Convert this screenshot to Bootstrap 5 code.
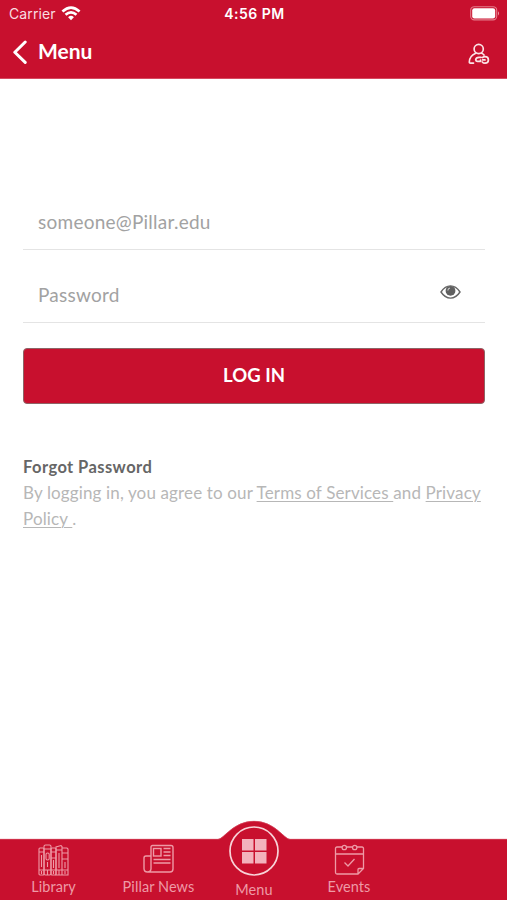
<!DOCTYPE html>
<html lang="en">
<head>
<meta charset="utf-8">
<meta name="viewport" content="width=device-width, initial-scale=1">
<title>Log in</title>
<link href="https://cdn.jsdelivr.net/npm/bootstrap@5.3.0/dist/css/bootstrap.min.css" rel="stylesheet">
<style>
:root { --brand: #c8102e; }
body { font-family: Lato, "Open Sans", sans-serif; background: #fff; }
svg { display: block; flex: none; }
.screen { height: 900px; width: 507px; overflow: hidden; }
.brand-bg { background: var(--brand); }
.top-bar { height: 79px; border-bottom: 1px solid #d64a60; }
.status { height: 27px; font-family: Inter, sans-serif; font-size: 14px; line-height: 27px; padding: 0 7px 0 9px; }
.status .carrier { color: #f9dde1; letter-spacing: .1px; }
.status .clock { font-weight: 600; letter-spacing: .5px; }
.status .wifi { margin-left: 5px; }
.title-row { height: 50px; padding: 0 17px 0 12px; }
.title-text { font-size: 21px; font-weight: 700; line-height: 26px; letter-spacing: -.05px; padding-left: 10px; margin-top: -2px; }
.login-form { padding: 116px 22px 0 23px; }
.field { height: 55px; border-bottom: 1.5px solid #e4e4e4; }
.field + .field { height: 73px; padding-top: 18px; }
.field .form-control { font-size: 19px; line-height: 28px; padding: 0 0 0 15px; color: #555; letter-spacing: .25px; }
.field .form-control::placeholder { color: #a2a2a2; opacity: 1; }
.eye { margin-right: 24px; margin-top: -7px; }
.login-btn { margin-top: 25px; height: 56px; background: var(--brand); border: 1px solid #8d6466; border-radius: 4px; font-size: 18.5px; font-weight: 700; letter-spacing: .05px; }
.login-btn:hover { background: #b50e29; }
.legal { margin-top: 50px; font-size: 17px; line-height: 26px; color: #b7b7b7; }
.legal a { color: #b7b7b7; white-space: pre-wrap; text-underline-offset: 2px; text-decoration-thickness: 1px; }
.forgot { color: #666; font-size: 16.5px; letter-spacing: .42px; }
.terms { width: 470px; margin-right: -10px; letter-spacing: .14px; }
.tab-area { height: 80px; color: #ee9aa6; }
.hump { left: 0; top: 0; }
.tab { height: 60px; font-size: 14.5px; line-height: 18px; color: inherit; padding-top: 4px; letter-spacing: .08px; }
.tab span { margin-top: 2px; }
.tab-home { height: 74px; padding-top: 0; }
.tab-home span { margin-top: 5px; }
.w-a { width: 107px; } .w-b { width: 103px; } .w-c { width: 88px; } .w-d { width: 102px; }
</style>
<script src="https://cdn.jsdelivr.net/npm/bootstrap@5.3.0/dist/js/bootstrap.bundle.min.js"></script>
</head>
<body>
<div class="screen d-flex flex-column">
  <header class="top-bar brand-bg text-white flex-shrink-0">
    <div class="status row g-0 align-items-center">
      <div class="col d-flex align-items-center">
        <span class="carrier">Carrier</span>
        <svg class="wifi" width="20" height="15" viewBox="0 0 18 14" fill="none" stroke="#fff" stroke-width="2.5"><path d="M1 5.1Q9-2.2 17 5.1M3.9 8.2Q9 3.6 14.1 8.2"/><path d="M6.3 10.4Q9 8 11.7 10.4L9 13.2Z" fill="#fff" stroke="none"/></svg>
      </div>
      <div class="col-auto clock">4:56 PM</div>
      <div class="col d-flex justify-content-end">
        <svg width="30" height="15" viewBox="0 0 30 15"><rect x=".7" y=".7" width="26" height="13.2" rx="3.6" fill="none" stroke="#e47c8b" stroke-width="1.1"/><rect x="2.2" y="2.2" width="23" height="10.2" rx="2.2" fill="#fff"/><path d="M28 5.2q2 2.1 0 4.2z" fill="#ee9aa6"/></svg>
      </div>
    </div>
    <nav class="title-row d-flex align-items-center justify-content-between">
      <a href="#" class="d-flex align-items-center text-white text-decoration-none">
        <svg width="16" height="24" viewBox="0 0 16 24" fill="none" stroke="#fff" stroke-width="3" stroke-linecap="round" stroke-linejoin="round"><path d="M13.2 2L2.8 12.2L13.2 22.4"/></svg>
        <span class="title-text">Menu</span>
      </a>
      <svg class="mt-1" width="22" height="22" viewBox="0 0 22 22" fill="none" stroke="#fbe3e6" stroke-width="1.7" stroke-linecap="round" stroke-linejoin="round"><circle cx="10.7" cy="6" r="4.6"/><path d="M7.7 10.2C3.500 12 1.300 15 1.300 19.200Q1.300 20.100 2.400 20.100H5.500M13.700 10.200Q15.200 10.800 16 12"/><path d="M13 14.300H11Q8 14.300 7.700 16.800Q7.900 18.300 9.500 18.300H12.500V17.200M14.500 14.500Q15.500 13.700 17 13.700Q20.400 13.700 20.400 16.900T17 20.100Q15.200 20.100 14.300 18.900M14.600 16.900H17"/></svg>
    </nav>
  </header>

  <main class="flex-grow-1">
    <form class="login-form">
      <div class="field d-flex align-items-center">
        <input type="email" class="form-control border-0 rounded-0 bg-transparent shadow-none" placeholder="someone@Pillar.edu" aria-label="Email">
      </div>
      <div class="field d-flex align-items-center">
        <input type="password" class="form-control border-0 rounded-0 bg-transparent shadow-none" placeholder="Password" aria-label="Password">
        <svg class="eye" width="21" height="14" viewBox="0 0 21 14"><path d="M1 7Q5 .9 10.500 .9T20 7Q16 13.100 10.500 13.100T1 7Z" fill="#fff" stroke="#666" stroke-width="1.400"/><circle cx="10.500" cy="5.800" r="4.900" fill="#606060"/><path d="M7.800 5.500Q8 3.400 10 3" fill="none" stroke="#ccc" stroke-width="1.100"/></svg>
      </div>
      <button type="button" class="login-btn btn text-white w-100 d-flex align-items-center justify-content-center p-0">LOG IN</button>
      <div class="legal">
        <div class="forgot fw-bold">Forgot Password</div>
        <div class="terms">By logging in, you agree to our <a href="#">Terms of Services </a>and <a href="#">Privacy<br>Policy </a>.</div>
      </div>
    </form>
  </main>

  <footer class="tab-area position-relative flex-shrink-0">
    <svg class="hump position-absolute" width="507" height="80" viewBox="0 0 507 80"><path d="M0 19H218C224 19 233 1 254 1S284 19 290 19H507V80H0Z" fill="#c8102e"/><path d="M0 19.300H218C224 19.300 233 1.300 254 1.300S284 19.300 290 19.300H507" fill="none" stroke="#d64a60" stroke-width=".7"/></svg>
    <nav class="position-relative d-flex align-items-end h-100">
      <a href="#" class="tab w-a d-flex flex-column align-items-center text-decoration-none">
        <svg width="31" height="32" viewBox="0 0 31 32" fill="none" stroke="#ee9aa6" stroke-width="1.1"><rect x="1" y="4" width="5" height="27" rx="1"/><rect x="6" y="1" width="7" height="30" rx="1.5"/><rect x="13" y="4" width="5" height="27" rx="1"/><path d="M18 31V3l5-1.500 1 1V31zM24 4h5l1 1v26h-6M1 8h5M1 26h29M6 5h7M13 8h5M18 6h6M24 9h6M24 15h6M13 14h5M3.500 11v12M15.500 16v8M21 9v15M27 18v6M3.500 27v3M9.500 26v5M15.500 27v3M21 26v5M27 27v3"/><rect x="8" y="9" width="3.200" height="7" rx="1.500"/><path d="M9.500 18v5"/></svg>
        <span>Library</span>
      </a>
      <a href="#" class="tab w-b d-flex flex-column align-items-center text-decoration-none">
        <svg width="31" height="32" viewBox="0 0 31 32" fill="none" stroke="#ee9aa6" stroke-width="1.400"><path d="M8 25V3Q8 1.500 9.500 1.500H28Q30 1.500 30 3.500V25Q30 28 27 28H4.500Q1 28 1 24.500V14Q1 12 3 12H8V24.500Q8 28 4.500 28"/><rect x="10.500" y="4.500" width="7.500" height="7.500"/><path d="M20.500 4.500H27.500M20.500 8H27.500M20.500 11.500H27.500M10.500 15.500H27.500M10.500 19H27.500" stroke-width="1.300"/></svg>
        <span>Pillar News</span>
      </a>
      <a href="#" class="tab tab-home w-c d-flex flex-column align-items-center text-decoration-none">
        <svg width="50" height="50" viewBox="0 0 50 50"><circle cx="25" cy="25" r="24" fill="none" stroke="#f8d3d8" stroke-width="1.700"/><path d="M13 13h11.500v11.500H13zM26 13h11.500v11.500H26zM13 26h11.500v11.500H13zM26 26h11.500v11.500H26z" fill="#f3b2bc"/></svg>
        <span>Menu</span>
      </a>
      <a href="#" class="tab w-d d-flex flex-column align-items-center text-decoration-none">
        <svg width="31" height="32" viewBox="0 0 31 32" fill="none" stroke="#ee9aa6" stroke-width="1.300"><path d="M8 3H3Q1.500 3 1.500 4.500V28.500Q1.500 30 3 30H24L29.500 24.500V4.500Q29.500 3 28 3H23M12.500 3H18.500M1.500 10H29.500M24 30V25.500Q24 24.500 25 24.500H29.500M10.500 18.500L14 22L20.500 15"/><circle cx="10.300" cy="3.500" r="2.200"/><circle cx="20.700" cy="3.500" r="2.200"/></svg>
        <span>Events</span>
      </a>
    </nav>
  </footer>
</div>
</body>
</html>
